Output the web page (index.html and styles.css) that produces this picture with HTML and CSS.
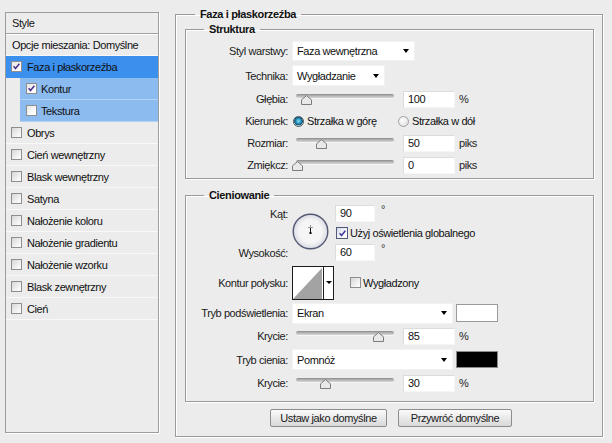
FILE: index.html
```html
<!DOCTYPE html>
<html lang="pl">
<head>
<meta charset="utf-8">
<title>Styl warstwy</title>
<link rel="stylesheet" href="styles.css">
</head>
<body>
<div class="app">
  <aside class="styles-panel">
    <div class="panel-head">Style</div>
    <div class="row plain">Opcje mieszania: Domyślne</div>
    <div class="row selected"><span class="cb"><svg viewBox="0 0 11 11"><path d="M2 5.2L4.3 8L9 2.2" fill="none" stroke="#4a2f8c" stroke-width="1.8"/></svg></span>Faza i płaskorzeźba</div>
    <div class="row sub"><span class="cb"><svg viewBox="0 0 11 11"><path d="M2 5.2L4.3 8L9 2.2" fill="none" stroke="#4a2f8c" stroke-width="1.8"/></svg></span>Kontur</div>
    <div class="row sub"><span class="cb"></span>Tekstura</div>
    <div class="row"><span class="cb"></span>Obrys</div>
    <div class="row"><span class="cb"></span>Cień wewnętrzny</div>
    <div class="row"><span class="cb"></span>Blask wewnętrzny</div>
    <div class="row"><span class="cb"></span>Satyna</div>
    <div class="row"><span class="cb"></span>Nałożenie koloru</div>
    <div class="row"><span class="cb"></span>Nałożenie gradientu</div>
    <div class="row"><span class="cb"></span>Nałożenie wzorku</div>
    <div class="row"><span class="cb"></span>Blask zewnętrzny</div>
    <div class="row"><span class="cb"></span>Cień</div>
  </aside>

  <fieldset class="group outer">
    <legend>Faza i płaskorzeźba</legend>

    <fieldset class="group inner struktura">
      <legend>Struktura</legend>
      <div class="frow tall">
        <span class="lbl">Styl warstwy:</span>
        <div class="select w-styl"><span>Faza wewnętrzna</span><span class="arrow"></span></div>
      </div>
      <div class="frow tall">
        <span class="lbl">Technika:</span>
        <div class="select w-tech"><span>Wygładzanie</span><span class="arrow"></span></div>
      </div>
      <div class="frow">
        <span class="lbl">Głębia:</span>
        <div class="slider"><div class="track"></div><svg class="thumb" style="left:9px" viewBox="0 0 11 10"><path d="M0.5 9.5V4.8L5.5 0.6L10.5 4.8V9.5Z" fill="#e9e9e9" stroke="#7c7c7c"/></svg></div>
        <span class="num">100</span><span class="unit">%</span>
      </div>
      <div class="frow">
        <span class="lbl">Kierunek:</span>
        <div class="radios">
          <span class="opt first"><span class="radio on"></span>Strzałka w górę</span>
          <span class="opt"><span class="radio"></span>Strzałka w dół</span>
        </div>
      </div>
      <div class="frow">
        <span class="lbl">Rozmiar:</span>
        <div class="slider"><div class="track"></div><svg class="thumb" style="left:24px" viewBox="0 0 11 10"><path d="M0.5 9.5V4.8L5.5 0.6L10.5 4.8V9.5Z" fill="#e9e9e9" stroke="#7c7c7c"/></svg></div>
        <span class="num">50</span><span class="unit">piks</span>
      </div>
      <div class="frow">
        <span class="lbl">Zmiękcz:</span>
        <div class="slider"><div class="track"></div><svg class="thumb" style="left:0px" viewBox="0 0 11 10"><path d="M0.5 9.5V4.8L5.5 0.6L10.5 4.8V9.5Z" fill="#e9e9e9" stroke="#7c7c7c"/></svg></div>
        <span class="num">0</span><span class="unit">piks</span>
      </div>
    </fieldset>

    <fieldset class="group inner cieniowanie">
      <legend>Cieniowanie</legend>
      <div class="angle">
        <span class="lbl a-kat">Kąt:</span>
        <svg class="dial" width="38" height="38" viewBox="0 0 38 38">
          <defs>
            <radialGradient id="dialFill" cx="50%" cy="50%" r="50%">
              <stop offset="0.65" stop-color="#f5f5f5"/>
              <stop offset="1" stop-color="#d9dbe4"/>
            </radialGradient>
          </defs>
          <circle cx="18.5" cy="18.5" r="17.3" fill="url(#dialFill)" stroke="#545a74" stroke-width="1.4"/>
          <path d="M18.5 12v5M16 14.5h5" stroke="#9a9a9a" stroke-width="1"/>
          <path d="M18.5 15v5" stroke="#111" stroke-width="1"/>
          <rect x="17.5" y="19" width="2" height="2" fill="#000"/>
        </svg>
        <div class="acell r1"><span class="num short">90</span><span class="deg">°</span></div>
        <div class="acell r2"><span class="cb check-blue"><svg viewBox="0 0 11 11"><path d="M2 5.2L4.3 8L9 2.2" fill="none" stroke="#3d3a9a" stroke-width="1.8"/></svg></span><span class="cb-text">Użyj oświetlenia globalnego</span></div>
        <span class="lbl a-wys">Wysokość:</span>
        <div class="acell r3"><span class="num short">60</span><span class="deg">°</span></div>
      </div>
      <div class="frow contour-row">
        <span class="lbl">Kontur połysku:</span>
        <div class="contour">
          <svg class="contour-preview" width="30" height="32" viewBox="0 0 30 32"><rect width="30" height="32" fill="#fff"/><path d="M0 32L29 1V32Z" fill="#a3a3a3"/></svg>
          <span class="contour-drop"><span class="arrow small"></span></span>
        </div>
        <span class="cb plain-cb"></span><span class="cb-text">Wygładzony</span>
      </div>
      <div class="frow mode">
        <span class="lbl">Tryb podświetlenia:</span>
        <div class="select w-mode"><span>Ekran</span><span class="arrow"></span></div>
        <span class="swatch white"></span>
      </div>
      <div class="frow">
        <span class="lbl">Krycie:</span>
        <div class="slider"><div class="track"></div><svg class="thumb" style="left:81px" viewBox="0 0 11 10"><path d="M0.5 9.5V4.8L5.5 0.6L10.5 4.8V9.5Z" fill="#e9e9e9" stroke="#7c7c7c"/></svg></div>
        <span class="num">85</span><span class="unit">%</span>
      </div>
      <div class="frow mode tall">
        <span class="lbl">Tryb cienia:</span>
        <div class="select w-mode"><span>Pomnóż</span><span class="arrow"></span></div>
        <span class="swatch black"></span>
      </div>
      <div class="frow">
        <span class="lbl">Krycie:</span>
        <div class="slider"><div class="track"></div><svg class="thumb" style="left:28px" viewBox="0 0 11 10"><path d="M0.5 9.5V4.8L5.5 0.6L10.5 4.8V9.5Z" fill="#e9e9e9" stroke="#7c7c7c"/></svg></div>
        <span class="num">30</span><span class="unit">%</span>
      </div>
    </fieldset>

    <div class="buttons">
      <button class="btn b1" type="button">Ustaw jako domyślne</button>
      <button class="btn b2" type="button">Przywróć domyślne</button>
    </div>
  </fieldset>
</div>
</body>
</html>
```

FILE: styles.css
```css
* { box-sizing: border-box; }
html, body { margin: 0; padding: 0; }
body {
  background: #ececec;
  font-family: "Liberation Sans", Arial, sans-serif;
  font-size: 11px;
  letter-spacing: -0.4px;
  color: #141414;
  width: 612px;
  height: 443px;
  overflow: hidden;
}
.app { display: flex; align-items: flex-start; }

/* left list */
.styles-panel {
  margin: 12px 0 0 5px;
  width: 154px;
  height: 421px;
  border: 1px solid #9d9d9d;
  box-shadow: 1px 1px 0 #fff;
  flex: none;
}
.panel-head {
  height: 21px;
  line-height: 20px;
  padding-left: 6px;
  border-bottom: 1px solid #a3a3a3;
  box-shadow: 0 1px 0 #fff;
}
.row {
  height: 22px;
  border-bottom: 1px solid #f8f8f8;
  display: flex;
  align-items: center;
  gap: 5px;
  padding-left: 5px;
  color: #101010;
}
.row.plain { padding-left: 6px; }
.panel-head + .row { margin-top: 1px; height: 21px; }
.row.selected { background: #3b8fed; border-bottom-color: #3b8fed; }
.row.sub {
  margin-left: 14px;
  padding-left: 6px;
  gap: 4px;
  background: #8cbbf0;
  border-bottom-color: #b3d2f5;
}
.cb {
  width: 11px;
  height: 11px;
  flex: none;
  border: 1px solid #8e8e8e;
  background: linear-gradient(135deg, #d6d6d6, #f9f9f9 80%);
  display: inline-flex;
}
.cb svg { width: 9px; height: 9px; }
.row.selected .cb, .row.sub .cb { background: linear-gradient(135deg, #e4e4e4, #ffffff 80%); }

/* fieldsets */
.group {
  margin: 0;
  min-width: 0;
  border: 1px solid #9a9a9a;
  box-shadow: 1px 1px 0 #fff, inset 1px 1px 0 #fff;
}
.group > legend {
  font-weight: bold;
  line-height: 14px;
  height: 14px;
  padding: 0 5px;
  letter-spacing: -0.35px;
  color: #111;
}
.outer {
  margin: 7px 0 0 16px;
  width: 428px;
  padding: 1px 8px 9px 9px;
}
.outer > legend { margin-left: 10px; }
.inner { width: 409px; padding: 0; }
.inner > legend { margin-left: 18px; }
.struktura { padding: 2px 0 2px 0; }
.cieniowanie { margin-top: 9px; padding: 1px 0 7px 0; }

/* rows */
.frow { display: flex; align-items: center; height: 22px; }
.frow.tall { height: 25px; }
.lbl {
  width: 102px;
  flex: none;
  text-align: right;
  margin-right: 4px;
  color: #1a1a1a;
}
.select {
  height: 20px;
  background: #fff;
  border: 1px solid #f2f2f2;
  display: flex;
  align-items: center;
  justify-content: space-between;
  padding: 0 5px 0 4px;
  color: #111;
}
.w-styl { width: 123px; }
.w-tech { width: 93px; height: 21px; }
.w-mode { width: 161px; height: 21px; }
.arrow {
  width: 0;
  height: 0;
  border-left: 3.5px solid transparent;
  border-right: 3.5px solid transparent;
  border-top: 4px solid #000;
}
.arrow.small { border-left-width: 3px; border-right-width: 3px; border-top-width: 3px; }

.slider {
  position: relative;
  width: 106px;
  height: 22px;
  padding: 6px 4px 0 4px;
  flex: none;
}
.track {
  height: 4px;
  border-radius: 2px;
  background: linear-gradient(#8a8a8a, #b8b8b8 50%, #d6d6d6);
  box-shadow: 0 1px 0 #f6f6f6;
}
.thumb { position: absolute; top: 7px; width: 11px; height: 10px; }

.num {
  width: 52px;
  height: 17px;
  margin-left: 5px;
  background: #fff;
  border: 1px solid;
  border-color: #dcdcdc #f6f6f6 #f6f6f6 #dcdcdc;
  padding-left: 4px;
  line-height: 15px;
  color: #111;
  flex: none;
}
.unit { margin-left: 4px; color: #222; }

.radios { display: flex; align-items: center; }
.opt { display: flex; align-items: center; gap: 3px; color: #111; }
.opt.first { width: 106px; padding-left: 1px; }
.radio {
  width: 11px;
  height: 11px;
  border-radius: 50%;
  border: 1px solid #a2a2a2;
  background: radial-gradient(circle at 40% 35%, #ffffff, #d8d8d8);
  flex: none;
}
.radio.on {
  border-color: #44525e;
  background: radial-gradient(circle at 50% 45%, #8fdcf5 0, #2a9ac6 35%, #15556f 60%, #dfe6ea 70%, #f4f4f4 100%);
}

/* angle block */
.angle {
  display: grid;
  grid-template-columns: 102px 39px 1fr;
  grid-template-rows: 21px 18px 21px;
  column-gap: 4px;
  align-items: center;
}
.angle .lbl { margin-right: 0; }
.a-kat { grid-column: 1; grid-row: 1; }
.a-wys { grid-column: 1; grid-row: 3; }
.dial { grid-column: 2; grid-row: 1 / 4; align-self: start; margin-top: 10px; }
.acell { grid-column: 3; display: flex; align-items: center; }
.acell.r1 { grid-row: 1; }
.acell.r2 { grid-row: 2; }
.acell.r3 { grid-row: 3; }
.num.short { width: 40px; margin-left: 0; }
.deg { margin-left: 6px; align-self: flex-start; line-height: 9px; color: #333; }
.cb.check-blue {
  width: 12px;
  height: 12px;
  border-color: #4f5a78;
  margin-left: 1px;
  align-items: center;
  justify-content: center;
  background: linear-gradient(135deg, #d8dbe6, #ffffff 80%);
}
.cb-text { margin-left: 2px; color: #111; }

.contour-row { height: 37px; margin-top: 1px; }
.contour {
  width: 42px;
  height: 34px;
  border: 1px solid #1c1c1c;
  display: flex;
  background: #fff;
  flex: none;
}
.contour-preview { display: block; }
.contour-drop {
  width: 10px;
  border-left: 1px solid #1c1c1c;
  display: flex;
  align-items: center;
  justify-content: center;
}
.plain-cb { margin-left: 16px; }

.frow.mode { height: 24px; }
.frow.mode.tall { height: 25px; }
.swatch { width: 42px; height: 18px; margin-left: 3px; border: 1px solid #9a9a9a; flex: none; }
.swatch.white { background: #fff; }
.swatch.black { background: #000; height: 17px; border-color: #8a8a8a; }

/* buttons */
.buttons { display: flex; margin-top: 7px; padding-left: 85px; gap: 11px; }
.btn {
  height: 18px;
  padding: 0;
  border: 1px solid #8c8c8c;
  border-radius: 2px;
  background: linear-gradient(#fbfbfb, #e6e6e6 60%, #d9d9d9);
  font-family: "Liberation Sans", Arial, sans-serif;
  font-size: 11px;
  letter-spacing: -0.4px;
  color: #1a1a1a;
  line-height: 16px;
}
.b1 { width: 117px; }
.b2 { width: 114px; }
```
